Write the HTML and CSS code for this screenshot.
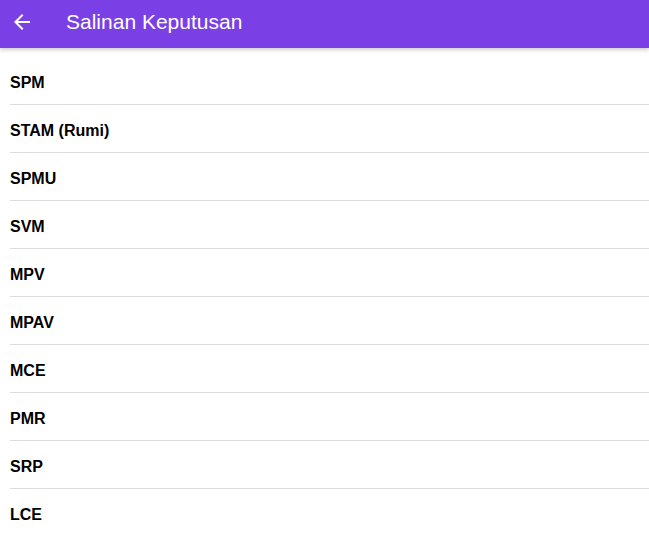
FILE: index.html
```html
<!DOCTYPE html>
<html lang="en">
<head>
    <meta charset="UTF-8">
    <meta name="viewport" content="width=device-width, initial-scale=1.0">
    <title>Salinan Keputusan</title>
    <link rel="stylesheet" href="styles.css">
</head>
<body>
    <div class="toolbar">
        <button class="back-btn" aria-label="Kembali">
            <svg width="24" height="24" viewBox="0 0 24 24">
                <path d="M20 11H7.83l5.59-5.59L12 4l-8 8 8 8 1.41-1.41L7.83 13H20v-2z" fill="#fff"/>
            </svg>
        </button>
        <h1 class="title">Salinan Keputusan</h1>
    </div>

    <ul class="list">
        <li class="item">SPM</li>
        <li class="item">STAM (Rumi)</li>
        <li class="item">SPMU</li>
        <li class="item">SVM</li>
        <li class="item">MPV</li>
        <li class="item">MPAV</li>
        <li class="item">MCE</li>
        <li class="item">PMR</li>
        <li class="item">SRP</li>
        <li class="item">LCE</li>
    </ul>
</body>
</html>
```

FILE: styles.css
```css
body {
    margin: 0;
    font-family: "Liberation Sans", Arial, sans-serif;
    background: #fff;
    overflow: hidden;
}
.toolbar {
    height: 48px;
    background: #7b3fe6;
    display: flex;
    align-items: center;
    padding-bottom: 5px;
    box-sizing: border-box;
    box-shadow: 0 2px 4px rgba(0,0,0,0.2);
    position: relative;
    z-index: 1;
}
.back-btn {
    background: none;
    border: none;
    padding: 0;
    margin-left: 10px;
    width: 24px;
    height: 24px;
    display: flex;
    cursor: pointer;
}
.title {
    margin: 0 0 0 32px;
    color: #fff;
    font-size: 21px;
    font-weight: normal;
}
.list {
    list-style: none;
    margin: 0;
    padding: 9px 0 0 10px;
}
.item {
    height: 43px;
    padding-top: 4px;
    line-height: 43px;
    border-bottom: 1px solid #ddd;
    font-size: 16px;
    font-weight: bold;
    color: #000;
}
```
